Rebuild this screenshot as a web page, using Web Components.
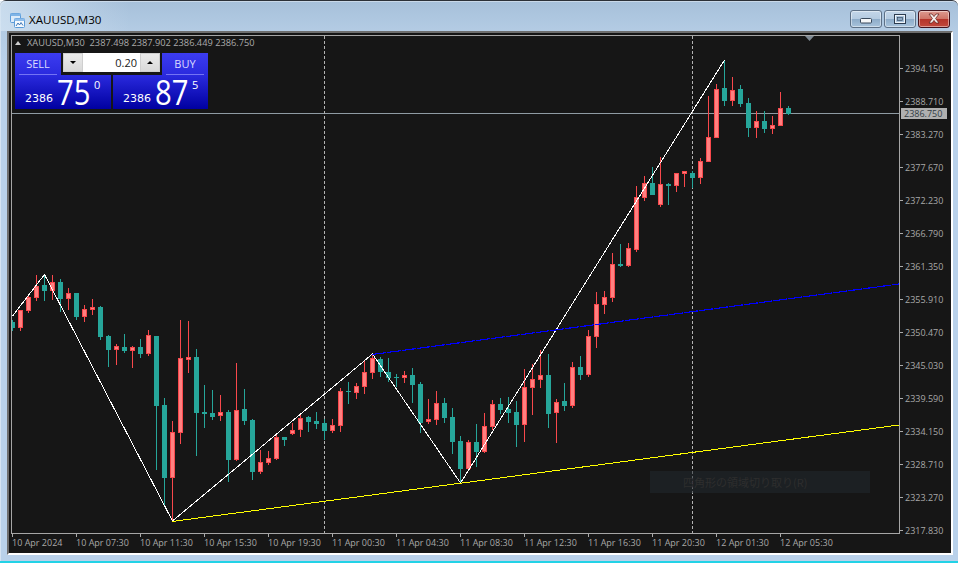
<!DOCTYPE html>
<html>
<head>
<meta charset="utf-8">
<title>XAUUSD,M30</title>
<style>
  html, body { margin: 0; padding: 0; background: #fff; }
  body { width: 958px; height: 563px; overflow: hidden; font-family: "Open Sans", sans-serif; }
</style>
</head>
<body>
<mt-window caption="XAUUSD,M30">
  <mt-chart></mt-chart>
</mt-window>

<script>
class WindowButton extends HTMLElement {
  connectedCallback() {
    const kind = this.getAttribute("kind");
    const glyphs = {
      min: `<rect x="10.5" y="8.5" width="11" height="4.5" rx="1" fill="#f4f6f8" stroke="#39495c"/>`,
      max: `<rect x="10.5" y="4.5" width="11" height="9" fill="#a9c3dc" stroke="#2c3c50" stroke-width="1"/><rect x="11.5" y="5.5" width="9" height="7" fill="none" stroke="#eef3f8"/><rect x="13.5" y="7.5" width="5" height="3" fill="#8aa6c2" stroke="#2c3c50" stroke-width="0.6"/>`,
      close: `<path d="M11 4h3l2 2.6 2-2.6h3l-3.4 4.5 3.4 4.5h-3l-2-2.6-2 2.6h-3l3.4-4.5z" fill="#f6f0ee" stroke="#5c1a16" stroke-width="0.7"/>`
    };
    this.attachShadow({ mode: "open" }).innerHTML = `
      <style>
        :host {
          display: block;
          width: 32px;
          height: 18px;
          box-sizing: border-box;
          border: 1px solid #5d7086;
          border-radius: 3px;
          box-shadow: inset 0 0 0 1px rgba(255,255,255,.45);
          background: linear-gradient(180deg, #c3d6e9 0%, #b5cbe1 48%, #8eacc9 52%, #a8c3dc 100%);
        }
        :host([kind="close"]) {
          border-color: #43121c;
          background: linear-gradient(180deg, #dd9a90 0%, #cf7568 48%, #b5342a 52%, #c2493c 100%);
        }
        svg { display: block; margin: -1px; }
      </style>
      <svg width="32" height="18" viewBox="0 0 32 18">${glyphs[kind]}</svg>`;
  }
}
customElements.define("window-button", WindowButton);

class MtWindow extends HTMLElement {
  connectedCallback() {
    this.attachShadow({ mode: "open" }).innerHTML = `
      <style>
        :host {
          display: flex;
          flex-direction: column;
          width: 958px;
          height: 563px;
          box-sizing: border-box;
          background: #fff;
        }
        .glass {
          flex: 1;
          display: flex;
          flex-direction: column;
          border-top: 1px solid #2b3038;
          border-radius: 6px 6px 0 0;
          background: linear-gradient(180deg, #a6c0da 0, #b4cce4 31px, #b9d1ea 60px);
          box-shadow: inset 1px 1px 0 rgba(255,255,255,.4);
        }
        .bar {
          height: 30px;
          display: flex;
          align-items: flex-start;
          padding: 9px 8px 0 10px;
          box-sizing: border-box;
          background: linear-gradient(90deg, rgba(214,230,244,.7) 0, rgba(214,230,244,0) 130px);
        }
        .icon { width: 15px; height: 15px; margin: 3px 4px 0 0; flex: none; }
        .caption { font: 11.6px/20px "Open Sans", sans-serif; color: #000; flex: 1; }
        .buttons { display: flex; gap: 2px; }
        .body { padding: 0 5px 5px 7px; }
        .strip { height: 2px; background: #22d2e6; flex: none; }
      </style>
      <div class="glass">
        <div class="bar">
          <svg class="icon" viewBox="0 0 15 15">
            <rect x=".5" y=".5" width="10" height="9" rx="1" fill="#dcebf9" stroke="#5b9bd8"/>
            <rect x=".5" y=".5" width="10" height="2.5" fill="#7fb4e6"/>
            <rect x="4.5" y="5.5" width="10" height="9" rx="1" fill="#f5f9fd" stroke="#5b9bd8"/>
            <rect x="4.5" y="5.5" width="10" height="2.5" fill="#8fbdea"/>
            <path d="M6 13l2-3 1.5 2 1.5-2.5 2 3" fill="none" stroke="#3d78b8"/>
          </svg>
          <div class="caption">${this.getAttribute("caption")}</div>
          <div class="buttons">
            <window-button kind="min"></window-button>
            <window-button kind="max"></window-button>
            <window-button kind="close"></window-button>
          </div>
        </div>
        <div class="body"><slot></slot></div>
      </div>
      <div class="strip"></div>`;
  }
}
customElements.define("mt-window", MtWindow);

class PriceQuote extends HTMLElement {
  connectedCallback() {
    this.attachShadow({ mode: "open" }).innerHTML = `
      <style>
        :host {
          display: flex;
          align-items: flex-end;
          height: 34px;
          box-sizing: border-box;
          padding: 0 0 4px 10px;
          color: #fff;
          background: linear-gradient(180deg, #2a2ade 0%, #0000a0 100%);
        }
        .small { font: 11px/11px "DejaVu Sans", sans-serif; width: 28px; margin-bottom: 1px; }
        .big {
          font: 34px/26px "Open Sans", sans-serif;
          width: 32px;
          margin-left: 4px;
          transform: scaleX(.86);
          transform-origin: left bottom;
          white-space: nowrap;
        }
        .sup { font: 11px/9px "Open Sans", sans-serif; align-self: flex-start; margin: 5px 0 0 5px; }
      </style>
      <span class="small">${this.getAttribute("base")}</span>
      <span class="big">${this.getAttribute("pips")}</span>
      <span class="sup">${this.getAttribute("point")}</span>`;
  }
}
customElements.define("price-quote", PriceQuote);

class TradePanel extends HTMLElement {
  connectedCallback() {
    this.attachShadow({ mode: "open" }).innerHTML = `
      <style>
        :host {
          display: flex;
          flex-direction: column;
          width: 193px;
          font-family: "Open Sans", sans-serif;
        }
        .top { display: flex; gap: 2px; height: 22px; }
        .side {
          width: 46px;
          box-sizing: border-box;
          text-align: center;
          font: 11px/21px "Open Sans", sans-serif;
          color: #dcdcff;
          background: linear-gradient(180deg, #3c3cf0 0%, #2a2ade 100%);
          position: relative;
        }
        .side::after {
          content: "";
          position: absolute;
          left: 4px; right: 4px; bottom: 0;
          height: 1px;
          background: #7474f4;
        }
        .volume {
          width: 97px;
          height: 19px;
          display: grid;
          grid-template-columns: 20px 1fr 20px;
          background: #fff;
        }
        .spin {
          display: flex;
          align-items: center;
          justify-content: center;
          background: linear-gradient(180deg, #ececec, #d8d8d8);
          box-shadow: inset 0 0 0 1px #cfcfcf;
        }
        .down { width: 0; height: 0; border: 3px solid transparent; border-top: 3px solid #000; border-bottom: 0; }
        .up { width: 0; height: 0; border: 3px solid transparent; border-bottom: 3px solid #000; border-top: 0; }
        .value { font: 11px/19px "Open Sans", sans-serif; color: #1a1a1a; text-align: right; padding-right: 3px; }
        .bottom { display: grid; grid-template-columns: 96px 95px; gap: 2px; }
      </style>
      <div class="top">
        <div class="side">SELL</div>
        <div class="volume">
          <div class="spin"><i class="down"></i></div>
          <div class="value">0.20</div>
          <div class="spin"><i class="up"></i></div>
        </div>
        <div class="side">BUY</div>
      </div>
      <div class="bottom">
        <price-quote base="2386" pips="75" point="0"></price-quote>
        <price-quote base="2386" pips="87" point="5"></price-quote>
      </div>`;
  }
}
customElements.define("trade-panel", TradePanel);

// wickTop, wickBottom, bodyTop, bodyBottom, up(1 red) / down(0 teal); first candle sits at x=12, then every 8px
const CANDLES = [
  [320,331,322,328,0],[310,331,310,328,1],[296,313,297,311,1],[275,301,286,298,1],[275,301,285,291,0],
  [275,300,282,291,1],[279,312,282,299,0],[288,310,293,299,1],[293,320,293,317,0],[305,322,309,317,1],
  [299,315,307,310,1],[306,340,307,337,0],[335,367,336,350,0],[344,365,346,350,1],[334,353,347,351,0],
  [346,368,347,351,1],[339,358,347,354,0],[330,356,335,354,1],[336,470,336,406,0],[398,507,405,478,0],
  [421,521,432,478,1],[320,444,358,433,1],[321,373,357,360,1],[349,456,357,413,0],[385,428,412,414,0],
  [390,420,413,417,0],[395,421,412,416,1],[410,482,412,460,0],[363,461,410,460,1],[389,425,409,421,0],
  [419,480,420,472,0],[450,474,462,472,1],[451,465,458,463,1],[435,460,437,459,1],[437,446,437,440,0],
  [423,435,430,434,1],[415,437,418,430,1],[416,432,417,422,0],[412,429,421,424,0],[419,440,423,431,0],
  [419,433,425,431,1],[388,432,391,426,1],[382,404,391,392,0],[383,399,386,393,1],[361,394,372,387,1],
  [354,379,358,373,1],[357,377,359,372,0],[358,382,372,378,0],[374,387,377,378,0],[371,383,375,378,1],
  [368,403,375,385,0],[382,433,384,423,0],[399,424,419,422,1],[391,425,403,420,1],[398,423,403,418,0],
  [408,454,417,442,0],[436,482,441,469,0],[440,470,442,469,1],[424,467,442,452,0],[413,453,426,452,1],
  [400,430,404,427,1],[398,414,404,410,0],[397,423,409,413,0],[401,447,412,425,0],[369,442,387,425,1],
  [364,415,379,388,1],[350,388,375,380,1],[354,428,375,414,0],[399,443,402,413,1],[383,411,401,406,0],
  [362,408,367,406,1],[356,380,367,375,0],[330,377,336,375,1],[292,348,304,337,1],[291,314,297,305,1],
  [253,302,264,298,1],[244,267,264,266,0],[243,267,248,266,1],[186,252,197,250,1],[176,201,183,198,1],
  [167,195,183,195,0],[157,207,184,205,1],[183,205,184,186,0],[173,192,173,186,1],[171,187,171,174,1],
  [171,188,173,178,0],[158,184,161,178,1],[96,162,137,162,1],[84,138,89,138,1],[60,106,88,101,0],
  [77,106,90,101,1],[85,107,89,104,0],[98,137,103,128,0],[111,138,121,128,1],[111,133,121,129,0],
  [116,134,125,129,1],[92,126,108,126,1],[106,115,108,114,0]
];

class CandlePlot extends HTMLElement {
  connectedCallback() {
    let candles = "";
    CANDLES.forEach(([wt, wb, bt, bb, up], i) => {
      const x = 12 + 8 * i;
      const edge = up ? "#f9484c" : "#26a69a";
      candles += `<rect x="${x}" y="${wt}" width="1" height="${wb - wt}" fill="${edge}"/>`;
      candles += `<rect x="${x - 2}" y="${bt}" width="5" height="${bb - bt}" fill="${edge}"/>`;
      if (up && bb - bt > 2) {
        candles += `<rect x="${x - 1}" y="${bt + 1}" width="3" height="${bb - bt - 2}" fill="#ff8080"/>`;
      }
    });
    this.attachShadow({ mode: "open" }).innerHTML = `
      <style>
        :host { display: block; width: 887px; height: 497px; }
        svg { display: block; }
      </style>
      <svg width="887" height="497" viewBox="12 36 887 497" shape-rendering="crispEdges">
        <line x1="12" y1="113.5" x2="899" y2="113.5" stroke="#8f9ba3"/>
        <line x1="324.5" y1="36" x2="324.5" y2="533" stroke="#b4b4b4" stroke-dasharray="3 2"/>
        <line x1="692.5" y1="36" x2="692.5" y2="533" stroke="#b4b4b4" stroke-dasharray="3 2"/>
        ${candles}
        <polyline points="12.5,316 44.5,274.5 172.5,521 372.5,354 460.5,483 724.5,60" fill="none" stroke="#fff"/>
        <line x1="172" y1="521.5" x2="899" y2="425" stroke="#ff0"/>
        <line x1="372" y1="354.5" x2="899" y2="284" stroke="#00f" stroke-width="1.15" stroke-dasharray="14 1"/>
        <polygon points="805,36 814,36 809.5,41" fill="#7f8a94" shape-rendering="auto"/>
      </svg>`;
  }
}
customElements.define("candle-plot", CandlePlot);

class PriceAxis extends HTMLElement {
  connectedCallback() {
    const labels = ["2394.150","2388.710","2383.270","2377.670","2372.230","2366.790","2361.350","2355.910",
      "2350.470","2345.030","2339.590","2334.150","2328.710","2323.270","2317.830"];
    this.attachShadow({ mode: "open" }).innerHTML = `
      <style>
        :host {
          display: grid;
          grid-auto-rows: 33px;
          padding-top: 17px;
          position: relative;
          font: 9px/33px "Open Sans", sans-serif;
          color: #a8a8a8;
        }
        div { display: flex; align-items: center; gap: 2px; height: 33px; }
        i { width: 3px; height: 1px; background: #aaa; flex: none; margin-top: -1px; }
        .now {
          position: absolute;
          left: 1px;
          top: 73px;
          width: 46px;
          height: 11px;
          box-sizing: border-box;
          padding-left: 3px;
          background: #b0b0b0;
          color: #333d44;
          font: 9px/11px "Open Sans", sans-serif;
        }
      </style>
      ${labels.map(p => `<div><i></i><span>${p}</span></div>`).join("")}
      <span class="now">2386.750</span>`;
  }
}
customElements.define("price-axis", PriceAxis);

class TimeAxis extends HTMLElement {
  connectedCallback() {
    const labels = ["10 Apr 2024","10 Apr 07:30","10 Apr 11:30","10 Apr 15:30","10 Apr 19:30","11 Apr 00:30",
      "11 Apr 04:30","11 Apr 08:30","11 Apr 12:30","11 Apr 16:30","11 Apr 20:30","12 Apr 01:30","12 Apr 05:30"];
    this.attachShadow({ mode: "open" }).innerHTML = `
      <style>
        :host {
          display: grid;
          grid-template-columns: repeat(13, 64px);
          padding-left: 1px;
          font: 9px/12px "Open Sans", sans-serif;
          color: #a8a8a8;
        }
        i { display: block; width: 1px; height: 3px; background: #aaa; }
        span { white-space: nowrap; }
      </style>
      ${labels.map(t => `<div><i></i><span>${t}</span></div>`).join("")}`;
  }
}
customElements.define("time-axis", TimeAxis);

class MtChart extends HTMLElement {
  connectedCallback() {
    this.attachShadow({ mode: "open" }).innerHTML = `
      <style>
        :host {
          display: grid;
          grid-template-columns: 889px 1fr;
          grid-template-rows: 499px 1fr;
          height: 524px;
          box-sizing: border-box;
          padding: 2px 0 0 2px;
          background: #161616;
          border-style: solid;
          border-width: 2px;
          border-color: #6e6e6e #fff #fff #6e6e6e;
        }
        .plot {
          position: relative;
          box-sizing: border-box;
          border: 1px solid #a6a6a6;
          width: 889px;
          height: 499px;
        }
        .info {
          position: absolute;
          left: 3px;
          top: 0;
          display: flex;
          align-items: center;
          height: 14px;
          font: 9.25px/14px "Open Sans", sans-serif;
          color: #ababab;
          white-space: pre;
        }
        .info i { width: 0; height: 0; margin-right: 6px; border: 3.5px solid transparent; border-bottom: 4px solid #cfcfcf; border-top: 0; }
        trade-panel { position: absolute; left: 3px; top: 17px; }
        .hint {
          position: absolute;
          left: 638px;
          top: 435px;
          width: 220px;
          height: 22px;
          box-sizing: border-box;
          padding-left: 33px;
          background: rgba(34, 42, 48, .55);
          color: #2e2e2e;
          font: 11px/22px "Noto Sans CJK JP", sans-serif;
        }
      </style>
      <div class="plot">
        <candle-plot></candle-plot>
        <div class="info"><i></i><span>XAUUSD,M30  2387.498 2387.902 2386.449 2386.750</span></div>
        <trade-panel></trade-panel>
        <div class="hint">四角形の領域切り取り(R)</div>
      </div>
      <price-axis></price-axis>
      <time-axis></time-axis>`;
  }
}
customElements.define("mt-chart", MtChart);
</script>
</body>
</html>
